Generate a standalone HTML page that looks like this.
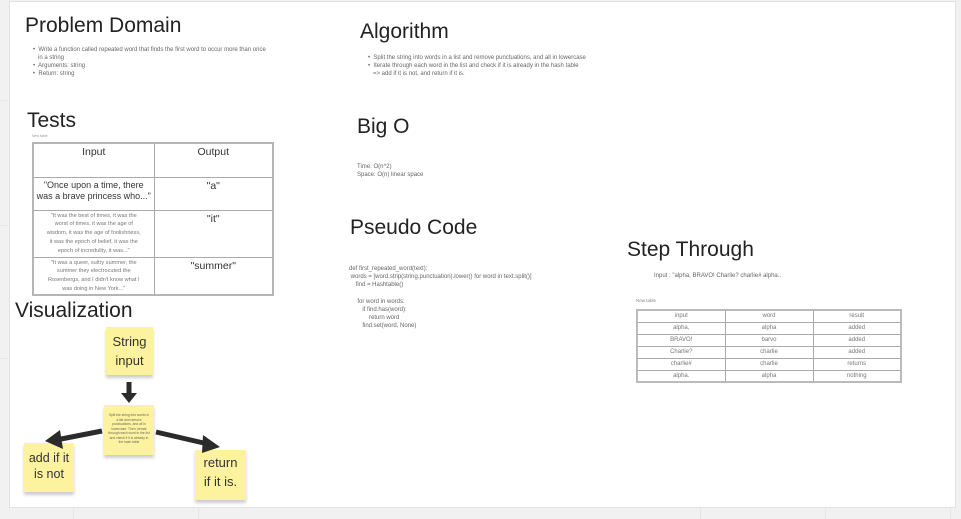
<!DOCTYPE html>
<html><head><meta charset="utf-8"><style>
*{margin:0;padding:0;box-sizing:border-box}
body{width:961px;height:519px;background:#f1f1f1;position:relative;overflow:hidden;font-family:"Liberation Sans",sans-serif;color:#333}
.gl{position:absolute;background:#e6e6e6}
#board{position:absolute;left:9px;top:1px;width:947px;height:507px;background:#fff;border:1px solid #e2e2e2}
.a{position:absolute;white-space:nowrap}
.h{font-size:21px;color:#222;font-weight:normal}
.s{font-size:6px;color:#666;line-height:8px}
table{position:absolute;border-collapse:collapse;table-layout:fixed}
td{border:1px solid #aaa;text-align:center;vertical-align:top;overflow:hidden}
.t1{border:2px solid #b5b5b5}
.t1 td{font-size:10.5px;color:#333;line-height:11px;padding-top:3px}
.t1 td.b{font-size:9px;line-height:11px;padding:2px 1px 0}
.t1 td.g{font-size:5.6px;color:#777;line-height:8.8px;padding:1px 2px 0}
.t2{border:2px solid #bbb}
.t2 td{font-size:6px;color:#777;height:12px;line-height:10px}
.st{position:absolute;background:#fdf39e;box-shadow:0 3px 3px rgba(0,0,0,.2);text-align:center;color:#333;font-size:13px;line-height:19px}
</style></head><body>
<div class="gl" style="left:0;top:100px;width:9px;height:1px"></div>
<div class="gl" style="left:0;top:225px;width:9px;height:1px"></div>
<div class="gl" style="left:0;top:358px;width:9px;height:1px"></div>
<div class="gl" style="left:73px;top:508px;width:1px;height:11px"></div>
<div class="gl" style="left:198px;top:508px;width:1px;height:11px"></div>
<div class="gl" style="left:700px;top:508px;width:1px;height:11px"></div>
<div class="gl" style="left:825px;top:508px;width:1px;height:11px"></div>
<div class="gl" style="left:950px;top:508px;width:1px;height:11px"></div>
<div id="board"></div>

<div class="a h" style="left:25px;top:14px">Problem Domain</div>
<div class="a s" style="left:33px;top:46px">•&nbsp; Write a function called repeated word that finds the first word to occur more than once<br>&nbsp;&nbsp;&nbsp;in a string<br>•&nbsp; Arguments: string<br>•&nbsp; Return: string</div>

<div class="a h" style="left:27px;top:109px">Tests</div>
<div class="a" style="left:32px;top:134px;font-size:3.5px;color:#999">New table</div>
<table class="t1" style="left:32px;top:142px;width:242px">
<colgroup><col style="width:121px"><col></colgroup>
<tr style="height:34px"><td>Input</td><td>Output</td></tr>
<tr style="height:33px"><td class="b">"Once upon a time, there<br>was a brave princess who..."</td><td>"a"</td></tr>
<tr style="height:47px"><td class="g">"It was the best of times, it was the<br>worst of times, it was the age of<br>wisdom, it was the age of foolishness,<br>it was the epoch of belief, it was the<br>epoch of incredulity, it was..."</td><td>"it"</td></tr>
<tr style="height:37px"><td class="g">"It was a queer, sultry summer, the<br>summer they electrocuted the<br>Rosenbergs, and I didn't know what I<br>was doing in New York..."</td><td>"summer"</td></tr>
</table>

<div class="a h" style="left:15px;top:299px">Visualization</div>

<div class="a h" style="left:360px;top:20px">Algorithm</div>
<div class="a s" style="left:368px;top:54px">•&nbsp; Split the string into words in a list and remove punctuations, and all in lowercase<br>•&nbsp; Iterate through each word in the list and check if it is already in the hash table<br>&nbsp;&nbsp;&nbsp;=&gt; add if it is not, and return if it is.</div>

<div class="a h" style="left:357px;top:115px">Big O</div>
<div class="a s" style="left:357px;top:163px">Time: O(n^2)<br>Space: O(n) linear space</div>

<div class="a h" style="left:350px;top:216px">Pseudo Code</div>
<div class="a s" style="left:349px;top:265px;line-height:8.2px">def first_repeated_word(text):<br>&nbsp;words = [word.strip(string.punctuation).lower() for word in text.split()]<br>&nbsp;&nbsp;&nbsp;&nbsp;find = Hashtable()<br><br>&nbsp;&nbsp;&nbsp;&nbsp;&nbsp;for word in words:<br>&nbsp;&nbsp;&nbsp;&nbsp;&nbsp;&nbsp;&nbsp;&nbsp;if find.has(word):<br>&nbsp;&nbsp;&nbsp;&nbsp;&nbsp;&nbsp;&nbsp;&nbsp;&nbsp;&nbsp;&nbsp;&nbsp;return word<br>&nbsp;&nbsp;&nbsp;&nbsp;&nbsp;&nbsp;&nbsp;&nbsp;find.set(word, None)</div>

<div class="a h" style="left:627px;top:238px">Step Through</div>
<div class="a s" style="left:654px;top:272px">Input : "alpha, BRAVO! Charlie? charlie# alpha..</div>
<div class="a" style="left:636px;top:298px;font-size:4.5px;color:#888">New table</div>
<table class="t2" style="left:636px;top:309px;width:266px">
<colgroup><col style="width:88px"><col style="width:88px"><col></colgroup>
<tr><td>input</td><td>word</td><td>result</td></tr>
<tr><td>alpha,</td><td>alpha</td><td>added</td></tr>
<tr><td>BRAVO!</td><td>barvo</td><td>added</td></tr>
<tr><td>Charlie?</td><td>charlie</td><td>added</td></tr>
<tr><td>charlie#</td><td>charlie</td><td>returns</td></tr>
<tr><td>alpha.</td><td>alpha</td><td>nothing</td></tr>
</table>

<div class="st" style="left:106px;top:327px;width:47px;height:48px;padding-top:5px">String<br>input</div>
<div class="st" style="left:104px;top:405px;width:50px;height:50px;font-size:3.3px;line-height:4.5px;padding:8px 4px 0;color:#666">Split the string into words in a list and remove punctuations, and all in lowercase. Then, iterate through each word in the list and check if it is already in the hash table</div>
<div class="st" style="left:24px;top:443px;width:50px;height:49px;padding-top:7px;font-size:12.5px;line-height:16px">add if it<br>is not</div>
<div class="st" style="left:195px;top:450px;width:51px;height:50px;padding-top:3px;font-size:13px;line-height:19px">return<br>if it is.</div>

<svg style="position:absolute;left:0;top:0" width="961" height="519">
<g stroke="#2b2b2b" stroke-width="5" fill="none">
<line x1="129" y1="382" x2="129" y2="396"/>
<line x1="102" y1="431" x2="56" y2="440"/>
<line x1="156" y1="432" x2="208" y2="444"/>
</g>
<g fill="#2b2b2b">
<polygon points="121,393 137,393 129,403"/>
<polygon points="60,430 45,441 63,449"/>
<polygon points="203,435 220,447 202,453"/>
</g>
</svg>
</body></html>
